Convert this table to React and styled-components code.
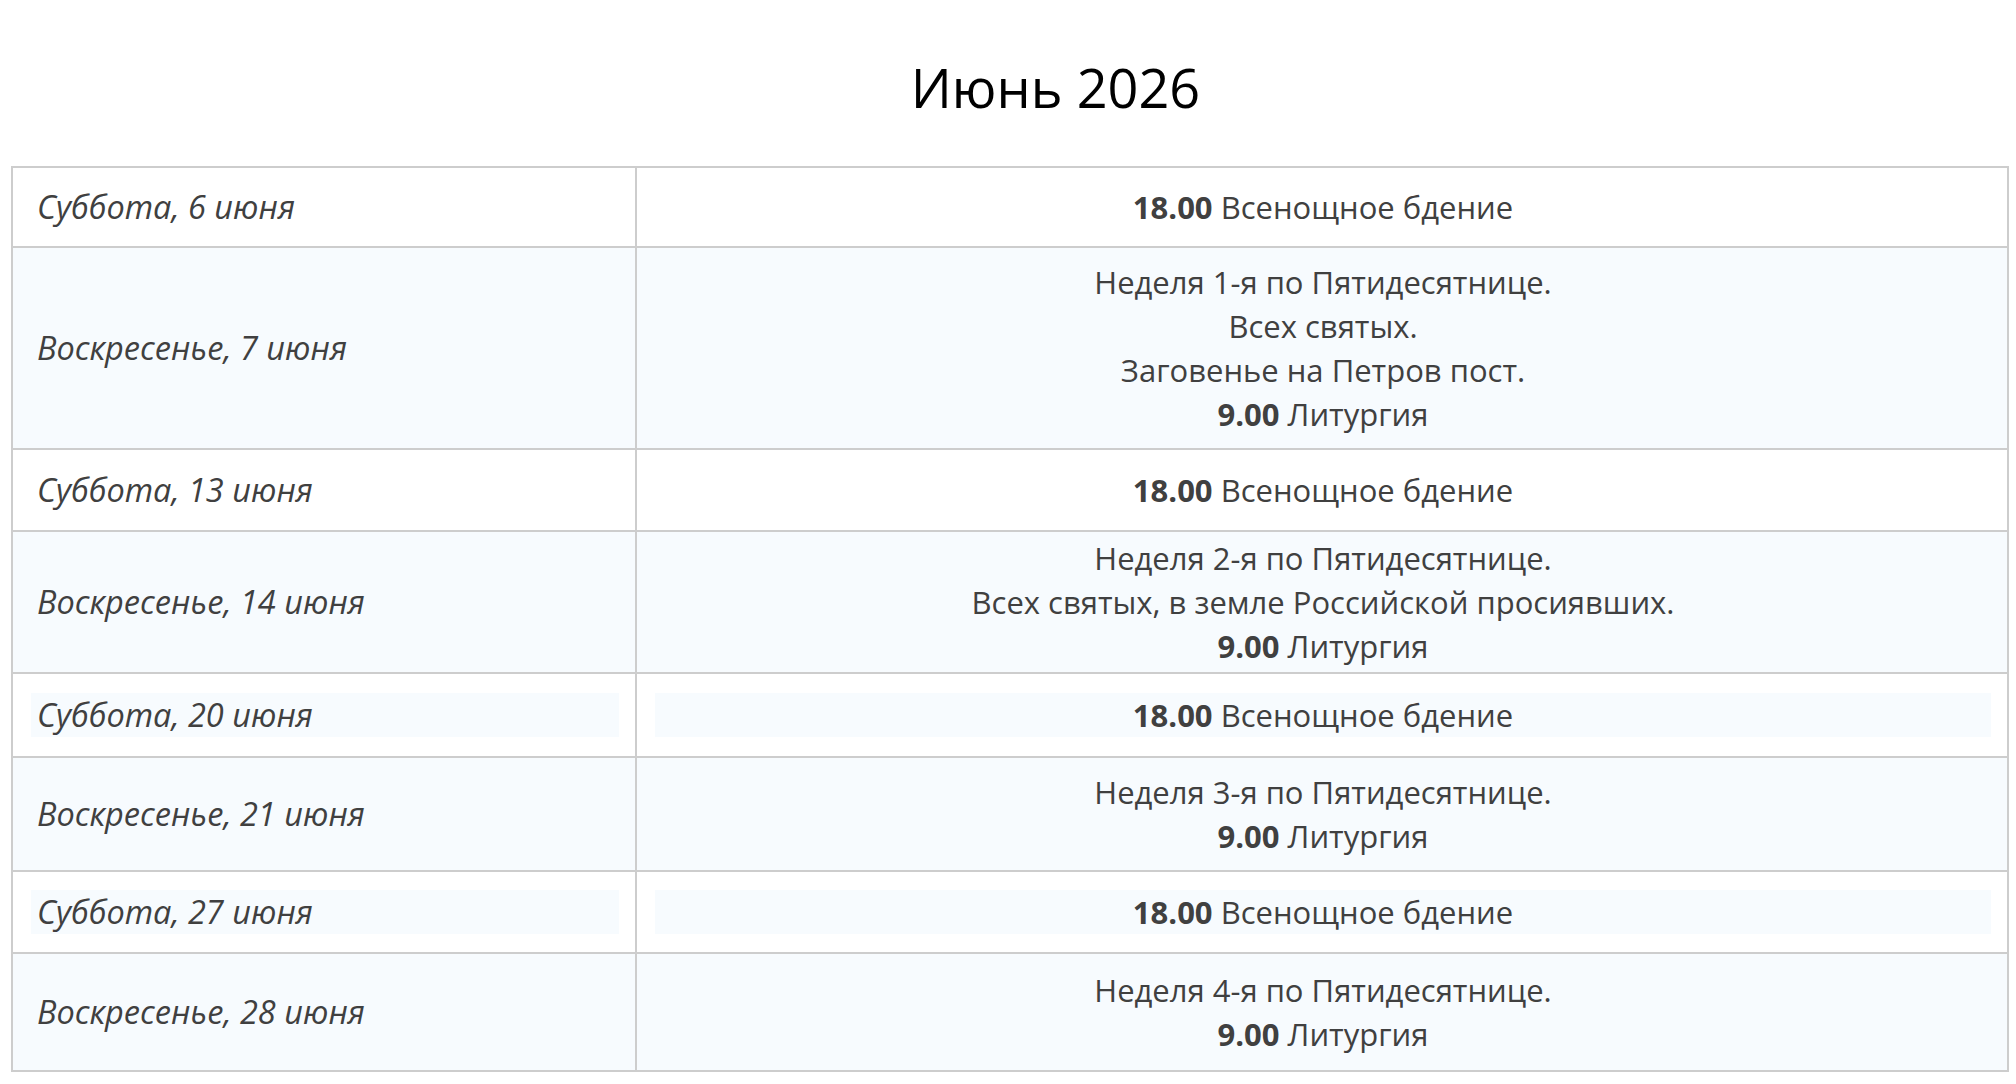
import React from "react";
import styled, { createGlobalStyle } from "styled-components";

const GlobalStyle = createGlobalStyle`
    html, body {
        margin: 0;
        padding: 0;
        background: #ffffff;
    }
    body {
        font-family: "Open Sans", "Noto Sans", sans-serif;
        color: #404040;
    }
`;

const Page = styled.div`
    padding: 0 9px 0 11px;
`;

const Title = styled.h1`
    margin: 0;
    padding: 54px 0 45px 93px;
    font-size: 54px;
    line-height: 67px;
    font-weight: 400;
    color: #000000;
    text-align: center;
`;

const Schedule = styled.table`
    width: 1996px;
    border-collapse: collapse;
    table-layout: fixed;
    border: 2px solid #cdcdcd;
`;

const Col = styled.col`
    width: ${(p) => p.$width}px;
`;

const Row = styled.tr`
    background: ${(p) => (p.$striped ? "#f7fbfe" : "#ffffff")};
`;

const Cell = styled.td`
    border: 2px solid #cdcdcd;
    padding: ${(p) => p.$pad}px 16px ${(p) => p.$pad}px 18px;
    vertical-align: middle;
    line-height: 44px;
`;

const DateCell = styled(Cell)`
    font-size: 32.5px;
    font-style: italic;
    text-align: left;
`;

const ServiceCell = styled(Cell)`
    font-size: 31px;
    text-align: center;
`;

const Para = styled.div`
    padding: 0 6px;
    background: ${(p) => (p.$boxed ? "#f7fbfe" : "transparent")};
`;

const Line = styled.div`
    white-space: nowrap;
`;

const Time = styled.b`
    font-weight: 700;
`;

const vespers = { time: "18.00", text: "Всенощное бдение" };
const liturgy = { time: "9.00", text: "Литургия" };

const rows = [
    { date: "Суббота, 6 июня", pad: 17, lines: [vespers] },
    {
        date: "Воскресенье, 7 июня",
        pad: 12,
        lines: ["Неделя 1-я по Пятидесятнице.", "Всех святых.", "Заговенье на Петров пост.", liturgy]
    },
    { date: "Суббота, 13 июня", pad: 18, lines: [vespers] },
    {
        date: "Воскресенье, 14 июня",
        pad: 4,
        lines: ["Неделя 2-я по Пятидесятнице.", "Всех святых, в земле Российской просиявших.", liturgy]
    },
    { date: "Суббота, 20 июня", pad: 19, boxed: true, lines: [vespers] },
    { date: "Воскресенье, 21 июня", pad: 12, lines: ["Неделя 3-я по Пятидесятнице.", liturgy] },
    { date: "Суббота, 27 июня", pad: 18, boxed: true, lines: [vespers] },
    { date: "Воскресенье, 28 июня", pad: 14, lines: ["Неделя 4-я по Пятидесятнице.", liturgy] }
];

const ServiceLine = ({ line }) => {
    if (typeof line === "string") return <Line>{line}</Line>;
    return (
        <Line>
            <Time>{line.time}</Time> {line.text}
        </Line>
    );
};

const App = () => {
    return (
        <>
            <GlobalStyle />
            <Page>
                <Title>Июнь 2026</Title>
                <Schedule>
                    <colgroup>
                        <Col $width={624} />
                        <Col $width={1372} />
                    </colgroup>
                    <tbody>
                        {rows.map((row, i) => (
                            <Row key={row.date} $striped={i % 2 === 1}>
                                <DateCell $pad={row.pad}>
                                    <Para $boxed={row.boxed}>{row.date}</Para>
                                </DateCell>
                                <ServiceCell $pad={row.pad}>
                                    <Para $boxed={row.boxed}>
                                        {row.lines.map((line, j) => (
                                            <ServiceLine key={j} line={line} />
                                        ))}
                                    </Para>
                                </ServiceCell>
                            </Row>
                        ))}
                    </tbody>
                </Schedule>
            </Page>
        </>
    );
};

export default App;
